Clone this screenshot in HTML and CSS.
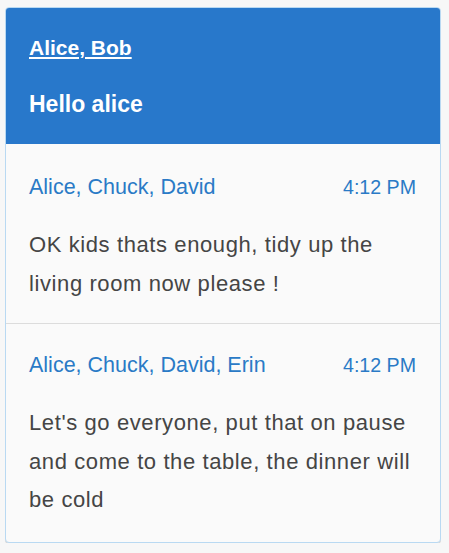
FILE: index.html
```html
<!DOCTYPE html>
<html>
<head>
<meta charset="utf-8">
<link rel="stylesheet" href="styles.css">
</head>
<body>
<div class="card">
  <div class="header">
    <a class="title" href="#">Alice, Bob</a>
    <div class="subtitle">Hello alice</div>
  </div>
  <div class="item item-first">
    <div class="meta">
      <span class="names">Alice, Chuck, David</span>
      <span class="time">4:12 PM</span>
    </div>
    <p class="body">OK kids thats enough, tidy up the living room now please !</p>
  </div>
  <div class="item item-last">
    <div class="meta">
      <span class="names">Alice, Chuck, David, Erin</span>
      <span class="time">4:12 PM</span>
    </div>
    <p class="body">Let's go everyone, put that on pause and come to the table, the dinner will be cold</p>
  </div>
</div>
</body>
</html>
```
FILE: styles.css
```css
html, body {
  margin: 0;
  padding: 0;
  background: #f7f7f7;
}
body {
  padding: 7px 7px 0 5px;
  font-family: "Liberation Sans", Arial, sans-serif;
}
.card {
  width: 434px;
  border: 1px solid #b9d9f2;
  border-radius: 4px;
  background: #fafafa;
  overflow: hidden;
  box-shadow: 0 1px 0 #d8d8d8;
}
.header {
  background: #2878cb;
  padding: 27px 23px 26px 23px;
}
.title {
  display: block;
  width: max-content;
  color: #fff;
  font-weight: bold;
  font-size: 21px;
  line-height: 26px;
  text-decoration: underline;
}
.subtitle {
  color: #fff;
  font-weight: bold;
  font-size: 23px;
  line-height: 28px;
  margin-top: 29px;
}
.item {
  padding: 30px 24px 20px 23px;
}
.item-last {
  border-top: 1px solid #dcdcdc;
  padding-top: 28px;
  padding-bottom: 22px;
}
.meta {
  display: flex;
  justify-content: space-between;
  align-items: baseline;
  color: #2a7ac6;
  line-height: 26px;
}
.names {
  font-size: 21.5px;
}
.time {
  font-size: 19.6px;
}
.body {
  margin: 26px 0 0 0;
  color: #454545;
  font-size: 22px;
  letter-spacing: 0.6px;
  line-height: 38.5px;
}
```
